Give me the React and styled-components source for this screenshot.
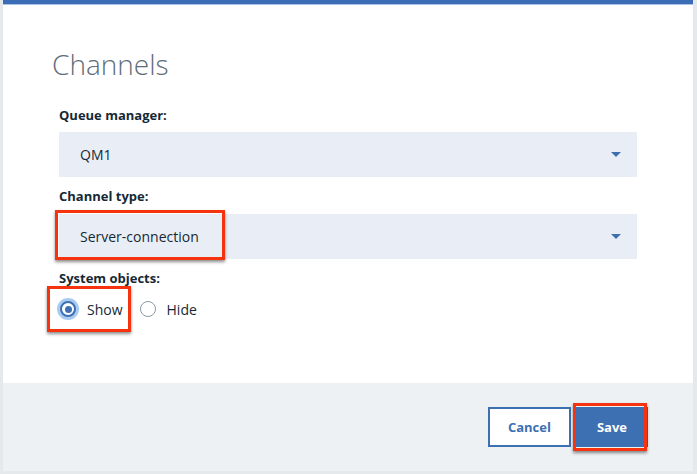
import React from "react";
import styled, { createGlobalStyle } from "styled-components";

const Global = createGlobalStyle`
  html, body {
    margin: 0;
    padding: 0;
    background: #e6e9ec;
  }
  body {
    font-family: "Open Sans", "Liberation Sans", sans-serif;
  }
`;

const Page = styled.div`
  width: 697px;
  height: 474px;
  padding-left: 3px;
  box-sizing: border-box;
`;

const Modal = styled.div`
  width: 690px;
  height: 471px;
  background: #fff;
  border-top: 4px solid #3a6db5;
  box-sizing: border-box;
  display: flex;
  flex-direction: column;
  box-shadow: inset 0 1px 0 #a9c3e6;
`;

const Body = styled.div`
  flex: 1;
  padding: 42px 56px 0 49px;
`;

const Title = styled.h2`
  margin: 0 0 24px;
  font-size: 28px;
  line-height: 36px;
  font-weight: 300;
  color: #5f6d78;
`;

const Form = styled.div`
  padding-left: 7px;
`;

const Field = styled.div`
  margin-bottom: 10px;
`;

const Label = styled.div`
  font-size: 13px;
  line-height: 18px;
  font-weight: 700;
  color: #152935;
  margin-bottom: ${(p) => p.gap || 8}px;
`;

const Select = styled.div`
  position: relative;
  height: 45px;
  background: #e9eef6;
  display: flex;
  align-items: center;
  justify-content: space-between;
  padding: 0 16px 0 21px;
  font-size: 14px;
  color: #152935;
`;

const Caret = styled.span`
  width: 0;
  height: 0;
  border-left: 5px solid transparent;
  border-right: 5px solid transparent;
  border-top: 5px solid #3d70b2;
`;

const Highlight = styled.div`
  position: absolute;
  left: ${(p) => p.l}px;
  top: ${(p) => p.t}px;
  width: ${(p) => p.w}px;
  height: ${(p) => p.h}px;
  border: 3px solid #f5330f;
  box-sizing: border-box;
  box-shadow: 0 2px 3px rgba(0, 0, 0, 0.45);
  pointer-events: none;
`;

const RadioGroup = styled.div`
  display: flex;
  align-items: center;
  height: 20px;
  margin-top: 12px;
  padding-left: 1px;
`;

const RadioOption = styled.label`
  position: relative;
  display: flex;
  align-items: center;
  gap: 11px;
  height: 20px;
  font-size: 14px;
  color: #152935;
  margin-right: 17px;
`;

const Circle = styled.span`
  width: 16px;
  height: 16px;
  border-radius: 50%;
  box-sizing: border-box;
  border: ${(p) => (p.checked ? "2px solid #3d70b2" : "1.5px solid #8c9ba5")};
  background: #fff;
  display: flex;
  align-items: center;
  justify-content: center;
  box-shadow: ${(p) => (p.checked ? "0 0 0 3px #a9cbf2" : "none")};
  &::after {
    content: "";
    display: ${(p) => (p.checked ? "block" : "none")};
    width: 7px;
    height: 7px;
    border-radius: 50%;
    background: #3d70b2;
  }
`;

const Footer = styled.div`
  height: 88px;
  background: #eef1f4;
  display: flex;
  align-items: center;
  justify-content: flex-end;
  gap: 5px;
  padding-right: 45px;
`;

const Button = styled.button`
  position: relative;
  height: 40px;
  padding: 0 ${(p) => p.pad}px;
  font-family: inherit;
  font-size: 13px;
  font-weight: 700;
  border: 2px solid #3d70b2;
  background: ${(p) => (p.primary ? "#3d70b2" : "#fff")};
  color: ${(p) => (p.primary ? "#fff" : "#3d70b2")};
  cursor: pointer;
`;

export default function App() {
  return (
    <Page>
      <Global />
      <Modal>
        <Body>
          <Title>Channels</Title>
          <Form>
            <Field>
              <Label>Queue manager:</Label>
              <Select>
                <span>QM1</span>
                <Caret />
              </Select>
            </Field>
            <Field>
              <Label gap={9}>Channel type:</Label>
              <Select>
                <span>Server-connection</span>
                <Caret />
                <Highlight l={-4} t={-4} w={170} h={50} />
              </Select>
            </Field>
            <Field>
              <Label>System objects:</Label>
              <RadioGroup>
                <RadioOption>
                  <Circle checked />
                  Show
                  <Highlight l={-13} t={-13} w={84} h={46} />
                </RadioOption>
                <RadioOption>
                  <Circle />
                  Hide
                </RadioOption>
              </RadioGroup>
            </Field>
          </Form>
        </Body>
        <Footer>
          <Button pad={18}>Cancel</Button>
          <Button primary pad={19}>
            Save
            <Highlight l={-5} t={-6} w={74} h={48} />
          </Button>
        </Footer>
      </Modal>
    </Page>
  );
}
